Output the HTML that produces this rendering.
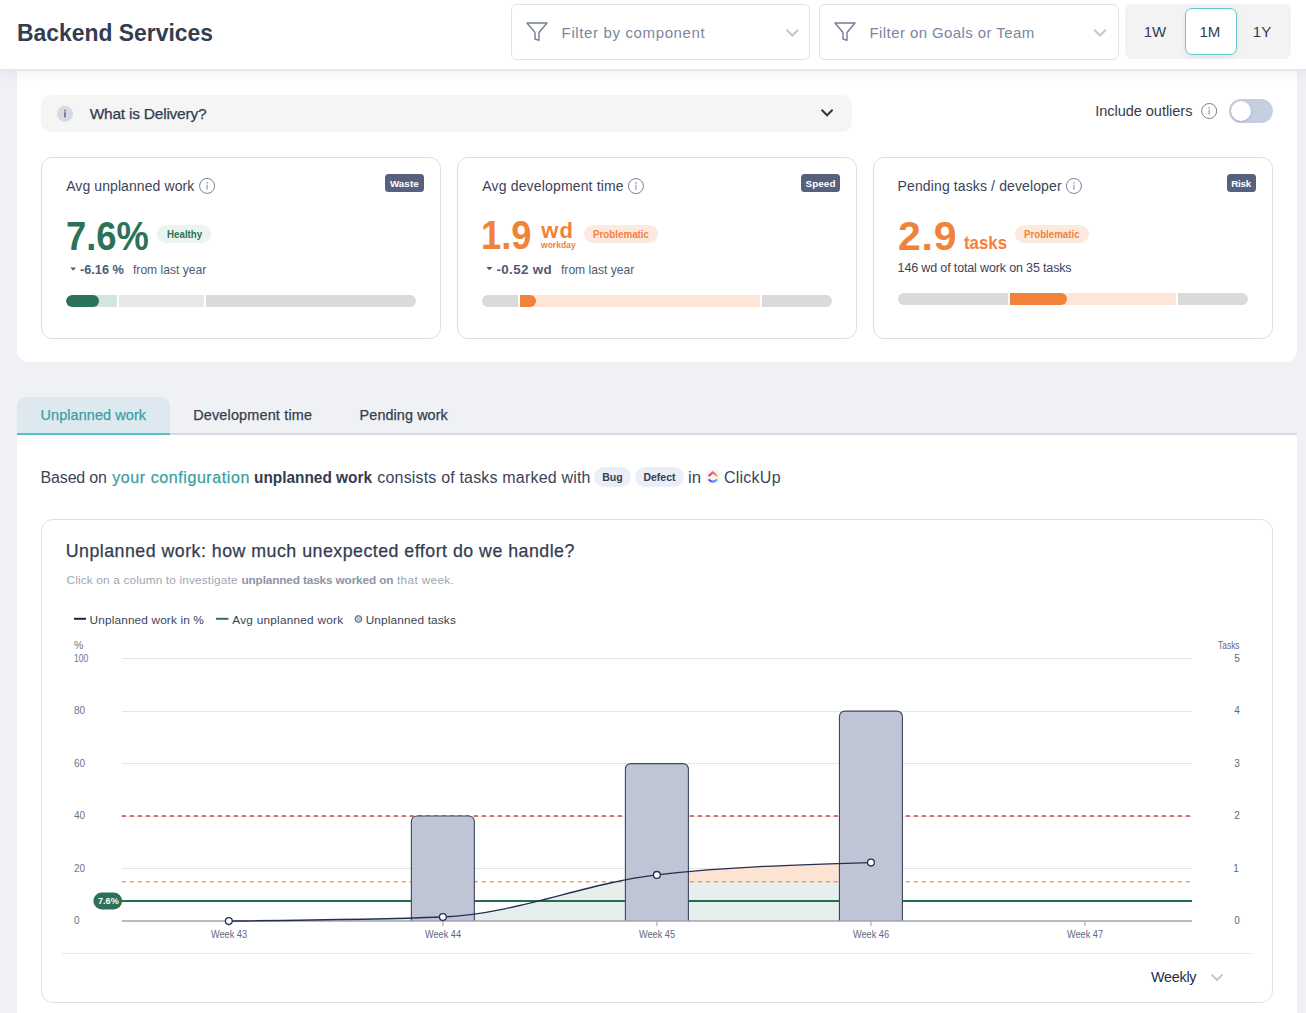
<!DOCTYPE html>
<html><head><meta charset="utf-8"><title>Backend Services</title>
<style>
*{box-sizing:border-box;margin:0;padding:0}
html,body{width:1306px;height:1013px;overflow:hidden;background:#f0f1f5;font-family:"Liberation Sans",sans-serif}
.a{position:absolute}
.t{position:absolute;white-space:nowrap;font-family:"Liberation Sans",sans-serif}
.ov{position:absolute;left:0;top:0;pointer-events:none}
</style></head><body>
<!-- top panel -->
<div class="a" style="left:17px;top:60px;width:1280px;height:302px;background:#fff;border-radius:0 0 12px 12px"></div>
<!-- header -->
<div class="a" style="left:0;top:0;width:1306px;height:70px;background:#fff;border-bottom:1px solid #e0e4ed;box-shadow:0 1px 0 #e6e9f0,0 3px 12px rgba(50,70,120,0.08)"></div>
<div class="a" style="left:511px;top:4px;width:299px;height:56px;border:1px solid #dfe3ec;border-radius:6px;background:#fff"></div>
<div class="a" style="left:819px;top:4px;width:300px;height:56px;border:1px solid #dfe3ec;border-radius:6px;background:#fff"></div>
<div class="a" style="left:1125px;top:4px;width:166px;height:55px;background:#f3f3f3;border-radius:7px"></div>
<div class="a" style="left:1185px;top:8px;width:52px;height:47px;background:#fff;border:1px solid #66c9cc;border-radius:7px;box-shadow:0 2px 6px rgba(0,0,0,0.07)"></div>
<!-- delivery bar -->
<div class="a" style="left:41px;top:95px;width:811px;height:37px;background:#f5f5f5;border-radius:10px"></div>
<!-- toggle -->
<div class="a" style="left:1229px;top:99px;width:44px;height:24px;background:#c8cee2;border-radius:12px"></div>
<div class="a" style="left:1231px;top:101px;width:20px;height:20px;background:#fff;border-radius:10px;box-shadow:0 1px 3px rgba(0,0,0,0.15)"></div>
<!-- cards -->
<div class="a" style="left:41px;top:157px;width:400px;height:182px;border:1px solid #d9dfe9;border-radius:11px;background:#fff"></div>
<div class="a" style="left:457px;top:157px;width:400px;height:182px;border:1px solid #d9dfe9;border-radius:11px;background:#fff"></div>
<div class="a" style="left:873px;top:157px;width:400px;height:182px;border:1px solid #d9dfe9;border-radius:11px;background:#fff"></div>
<!-- badges -->
<div class="a" style="left:385px;top:174px;width:39px;height:18px;background:#566180;border-radius:3.5px"></div>
<div class="a" style="left:801px;top:174px;width:39px;height:18px;background:#566180;border-radius:3.5px"></div>
<div class="a" style="left:1227px;top:174px;width:29px;height:18px;background:#566180;border-radius:3.5px"></div>
<!-- status pills -->
<div class="a" style="left:157px;top:225px;width:54px;height:18px;background:#ebf4ef;border-radius:9px"></div>
<div class="a" style="left:584px;top:225px;width:74px;height:18px;background:#fdeadf;border-radius:9px"></div>
<div class="a" style="left:1015px;top:225px;width:74px;height:18px;background:#fdeadf;border-radius:9px"></div>
<!-- progress card1 -->
<div class="a" style="left:66px;top:295px;width:350px;height:12px;border-radius:6px;overflow:hidden;background:#fff">
  <div class="a" style="left:0;top:0;width:51px;height:12px;background:#d3e5dc"></div>
  <div class="a" style="left:53px;top:0;width:85px;height:12px;background:#e8e8e8"></div>
  <div class="a" style="left:140px;top:0;width:210px;height:12px;background:#dadada"></div>
  <div class="a" style="left:0;top:0;width:33px;height:12px;background:#2b7256;border-radius:6px"></div>
</div>
<!-- progress card2 -->
<div class="a" style="left:482px;top:295px;width:350px;height:12px;border-radius:6px;overflow:hidden;background:#fff">
  <div class="a" style="left:0;top:0;width:36px;height:12px;background:#dadada"></div>
  <div class="a" style="left:38px;top:0;width:240px;height:12px;background:#fde6d7"></div>
  <div class="a" style="left:280px;top:0;width:70px;height:12px;background:#dadada"></div>
  <div class="a" style="left:38px;top:0;width:16px;height:12px;background:#f2813a;border-radius:0 6px 6px 0"></div>
</div>
<!-- progress card3 -->
<div class="a" style="left:898px;top:293px;width:350px;height:12px;border-radius:6px;overflow:hidden;background:#fff">
  <div class="a" style="left:0;top:0;width:110px;height:12px;background:#dadada"></div>
  <div class="a" style="left:112px;top:0;width:166px;height:12px;background:#fde6d7"></div>
  <div class="a" style="left:280px;top:0;width:70px;height:12px;background:#dadada"></div>
  <div class="a" style="left:112px;top:0;width:57px;height:12px;background:#f2813a;border-radius:0 6px 6px 0"></div>
</div>
<!-- tabs -->
<div class="a" style="left:17px;top:397px;width:153px;height:38px;background:#dee9ef;border-radius:9px 9px 0 0"></div>
<div class="a" style="left:17px;top:433px;width:1280px;height:2px;background:#d5dce6"></div>
<div class="a" style="left:17px;top:433px;width:153px;height:2px;background:#56c3c8"></div>
<div class="a" style="left:17px;top:435px;width:1280px;height:578px;background:#fff"></div>
<!-- bug/defect pills -->
<div class="a" style="left:594px;top:467px;width:37px;height:19.5px;background:#e9eef7;border-radius:10px"></div>
<div class="a" style="left:635px;top:467px;width:49px;height:19.5px;background:#e9eef7;border-radius:10px"></div>
<!-- chart card -->
<div class="a" style="left:41px;top:519px;width:1232px;height:484px;border:1px solid #dbe1ea;border-radius:12px;background:#fff"></div>
<svg class='ov' width='1306' height='1013' viewBox='0 0 1306 1013'><line x1='121.8' x2='1192.0' y1='658.5' y2='658.5' stroke='#e5e5e6' stroke-width='1'/><line x1='121.8' x2='1192.0' y1='711.5' y2='711.5' stroke='#e5e5e6' stroke-width='1'/><line x1='121.8' x2='1192.0' y1='763.5' y2='763.5' stroke='#e5e5e6' stroke-width='1'/><line x1='121.8' x2='1192.0' y1='816.5' y2='816.5' stroke='#e5e5e6' stroke-width='1'/><line x1='121.8' x2='1192.0' y1='868.5' y2='868.5' stroke='#e5e5e6' stroke-width='1'/><defs><clipPath id='above'><rect x='0' y='0' width='1306' height='881.65'/></clipPath><linearGradient id='cu1' x1='0' x2='1' y1='0' y2='0'><stop offset='0' stop-color='#ee1fae'/><stop offset='1' stop-color='#f7a41d'/></linearGradient><linearGradient id='cu2' x1='0' x2='1' y1='0' y2='0'><stop offset='0' stop-color='#6b36f2'/><stop offset='1' stop-color='#48b0f0'/></linearGradient></defs><path d='M228.82,921.00 C300.17,920.33 371.51,919.67 442.86,917.00 C514.21,914.33 585.55,883.10 656.90,874.90 C728.25,866.70 799.59,864.65 870.94,862.60 L870.94,921.0 L228.82,921.0 Z' fill='#e6efec'/><path d='M228.82,921.00 C300.17,920.33 371.51,919.67 442.86,917.00 C514.21,914.33 585.55,883.10 656.90,874.90 C728.25,866.70 799.59,864.65 870.94,862.60 L870.94,921.0 L228.82,921.0 Z' fill='#fde3d2' clip-path='url(#above)'/><line x1='121.8' x2='1192.0' y1='816.06' y2='816.06' stroke='#c9423f' stroke-width='1.5' stroke-dasharray='4 4'/><line x1='121.8' x2='1192.0' y1='881.65' y2='881.65' stroke='#f39a56' stroke-width='1.5' stroke-dasharray='4 4'/><line x1='121.8' x2='1192.0' y1='901.06' y2='901.06' stroke='#236d50' stroke-width='2'/><path d='M411.36,921.0 V822.06 Q411.36,816.06 417.36,816.06 H468.36 Q474.36,816.06 474.36,822.06 V921.0' fill='#c0c5d5' stroke='#3b4663' stroke-width='1.1'/><path d='M625.40,921.0 V769.59 Q625.40,763.59 631.40,763.59 H682.40 Q688.40,763.59 688.40,769.59 V921.0' fill='#c0c5d5' stroke='#3b4663' stroke-width='1.1'/><path d='M839.44,921.0 V717.12 Q839.44,711.12 845.44,711.12 H896.44 Q902.44,711.12 902.44,717.12 V921.0' fill='#c0c5d5' stroke='#3b4663' stroke-width='1.1'/><line x1='121.8' x2='1192.0' y1='921.0' y2='921.0' stroke='#9ca3b2' stroke-width='1.6'/><line x1='228.82' x2='228.82' y1='921.0' y2='926.0' stroke='#a7adbd' stroke-width='1.2'/><line x1='442.86' x2='442.86' y1='921.0' y2='926.0' stroke='#a7adbd' stroke-width='1.2'/><line x1='656.90' x2='656.90' y1='921.0' y2='926.0' stroke='#a7adbd' stroke-width='1.2'/><line x1='870.94' x2='870.94' y1='921.0' y2='926.0' stroke='#a7adbd' stroke-width='1.2'/><line x1='1084.98' x2='1084.98' y1='921.0' y2='926.0' stroke='#a7adbd' stroke-width='1.2'/><path d='M228.82,921.00 C300.17,920.33 371.51,919.67 442.86,917.00 C514.21,914.33 585.55,883.10 656.90,874.90 C728.25,866.70 799.59,864.65 870.94,862.60' fill='none' stroke='#243052' stroke-width='1.3'/><circle cx='228.82' cy='921.00' r='3.4' fill='#fff' stroke='#243052' stroke-width='1.3'/><circle cx='442.86' cy='917.00' r='3.4' fill='#fff' stroke='#243052' stroke-width='1.3'/><circle cx='656.90' cy='874.90' r='3.4' fill='#fff' stroke='#243052' stroke-width='1.3'/><circle cx='870.94' cy='862.60' r='3.4' fill='#fff' stroke='#243052' stroke-width='1.3'/><rect x='93.4' y='892.4' width='28.7' height='17.1' rx='8.5' fill='#2b7256'/><line x1='74' x2='86' y1='618.8' y2='618.8' stroke='#1d2747' stroke-width='2'/><line x1='216' x2='228.4' y1='618.8' y2='618.8' stroke='#2b7256' stroke-width='2'/><circle cx='358.4' cy='619' r='3.4' fill='#c0c5d5' stroke='#5a6381' stroke-width='1'/><line x1='62' x2='1252' y1='953.5' y2='953.5' stroke='#e4e8ef' stroke-width='1'/><polyline points='1211.5,974.5 1217,980 1222.5,974.5' fill='none' stroke='#c4c6cc' stroke-width='2'/><path d='M527,23 H547 L539,32.5 V40.3 L535,39 V32.5 Z' fill='none' stroke='#747d96' stroke-width='1.4' stroke-linejoin='round'/><path d='M835,23 H855 L847,32.5 V40.3 L843,39 V32.5 Z' fill='none' stroke='#747d96' stroke-width='1.4' stroke-linejoin='round'/><polyline points='786.5,29.8 792.3,35.5 798.1,29.8' fill='none' stroke='#c4c6cc' stroke-width='2'/><polyline points='1094.2,29.8 1100.0,35.5 1105.8,29.8' fill='none' stroke='#c4c6cc' stroke-width='2'/><polyline points='821.6,109.8 827.1,115.3 832.6,109.8' fill='none' stroke='#2d3748' stroke-width='2'/><circle cx='712.9' cy='477' r='8' fill='#f4f4f5'/><polyline points='709.3,475.6 712.9,472.2 716.5,475.6' fill='none' stroke='url(#cu1)' stroke-width='2' stroke-linecap='round' stroke-linejoin='round'/><path d='M709.3,479.9 Q712.9,483.2 716.5,479.9' fill='none' stroke='url(#cu2)' stroke-width='2' stroke-linecap='round'/><circle cx='207.1' cy='185.9' r='7.5' fill='none' stroke='#7a8296' stroke-width='1'/><circle cx='207.1' cy='182.70000000000002' r='0.9' fill='#a4a9b6'/><rect x='206.4' y='184.6' width='1.4' height='5' fill='#a4a9b6'/><circle cx='635.9' cy='186.1' r='7.5' fill='none' stroke='#7a8296' stroke-width='1'/><circle cx='635.9' cy='182.9' r='0.9' fill='#a4a9b6'/><rect x='635.1999999999999' y='184.79999999999998' width='1.4' height='5' fill='#a4a9b6'/><circle cx='1073.9' cy='186' r='7.5' fill='none' stroke='#7a8296' stroke-width='1'/><circle cx='1073.9' cy='182.8' r='0.9' fill='#a4a9b6'/><rect x='1073.2' y='184.7' width='1.4' height='5' fill='#a4a9b6'/><circle cx='1209.2' cy='111' r='7.5' fill='none' stroke='#7a8296' stroke-width='1'/><circle cx='1209.2' cy='107.8' r='0.9' fill='#a4a9b6'/><rect x='1208.5' y='109.7' width='1.4' height='5' fill='#a4a9b6'/><path d='M70.3,267.5 H76 L73.15,270.8 Z' fill='#4f5a75'/><path d='M486.3,266.9 H492.5 L489.4,270.3 Z' fill='#4f5a75'/><circle cx='65' cy='113.8' r='8' fill='#d6dae2'/><circle cx='65' cy='110.6' r='0.9' fill='#4f5a75'/><rect x='64.3' y='112.3' width='1.4' height='5' fill='#4f5a75'/></svg>
<div class='t' style='left:17.30px;top:17.80px;font-size:24px;line-height:30px;font-weight:700;color:#333c50;letter-spacing:0.000px;transform:scaleX(0.9537);transform-origin:0 0;'>Backend Services</div>
<div class='t' style='left:561.60px;top:22.90px;font-size:15px;line-height:19px;font-weight:400;color:#7a86a3;letter-spacing:0.632px;'>Filter by component</div>
<div class='t' style='left:869.50px;top:22.70px;font-size:15px;line-height:19px;font-weight:400;color:#7a86a3;letter-spacing:0.413px;'>Filter on Goals or Team</div>
<div class='t' style='left:1143.70px;top:21.80px;font-size:15px;line-height:19px;font-weight:400;color:#333c50;letter-spacing:0.000px;'>1W</div>
<div class='t' style='left:1199.38px;top:21.80px;font-size:15px;line-height:19px;font-weight:400;color:#333c50;letter-spacing:0.000px;'>1M</div>
<div class='t' style='left:1252.87px;top:21.80px;font-size:15px;line-height:19px;font-weight:400;color:#333c50;letter-spacing:0.000px;'>1Y</div>
<div class='t' style='left:89.70px;top:103.70px;font-size:15.5px;line-height:20px;font-weight:400;color:#333c50;letter-spacing:-0.232px;-webkit-text-stroke:0.25px currentColor;'>What is Delivery?</div>
<div class='t' style='left:1095.20px;top:102.00px;font-size:14.5px;line-height:19px;font-weight:400;color:#333c50;letter-spacing:-0.019px;'>Include outliers</div>
<div class='t' style='left:66.20px;top:176.80px;font-size:14px;line-height:18px;font-weight:400;color:#3b4459;letter-spacing:0.086px;'>Avg unplanned work</div>
<div class='t' style='left:482.30px;top:177.20px;font-size:14px;line-height:18px;font-weight:400;color:#3b4459;letter-spacing:0.162px;'>Avg development time</div>
<div class='t' style='left:897.60px;top:176.70px;font-size:14px;line-height:18px;font-weight:400;color:#3b4459;letter-spacing:0.121px;'>Pending tasks / developer</div>
<div class='t' style='left:389.90px;top:177.00px;font-size:9.8px;line-height:13px;font-weight:700;color:#ffffff;letter-spacing:0.070px;'>Waste</div>
<div class='t' style='left:805.50px;top:177.00px;font-size:9.8px;line-height:13px;font-weight:700;color:#ffffff;letter-spacing:0.123px;'>Speed</div>
<div class='t' style='left:1231.20px;top:177.00px;font-size:9.8px;line-height:13px;font-weight:700;color:#ffffff;letter-spacing:-0.207px;'>Risk</div>
<div class='t' style='left:65.90px;top:209.80px;font-size:41px;line-height:52px;font-weight:700;color:#2b7256;letter-spacing:0.000px;transform:scaleX(0.8853);transform-origin:0 0;'>7.6%</div>
<div class='t' style='left:166.60px;top:227.90px;font-size:10.4px;line-height:13px;font-weight:700;color:#2b7256;letter-spacing:0.000px;transform:scaleX(0.9383);transform-origin:0 0;'>Healthy</div>
<div class='t' style='left:80.20px;top:260.70px;font-size:13.4px;line-height:17px;font-weight:700;color:#4f5a75;letter-spacing:0.000px;transform:scaleX(0.9514);transform-origin:0 0;'>-6.16 %</div>
<div class='t' style='left:133.10px;top:260.70px;font-size:13.2px;line-height:17px;font-weight:400;color:#4f5a75;letter-spacing:0.000px;transform:scaleX(0.9166);transform-origin:0 0;'>from last year</div>
<div class='t' style='left:481.40px;top:210.40px;font-size:40px;line-height:50px;font-weight:700;color:#f2813a;letter-spacing:0.000px;transform:scaleX(0.9093);transform-origin:0 0;'>1.9</div>
<div class='t' style='left:541.27px;top:216.70px;font-size:22px;line-height:28px;font-weight:700;color:#f2813a;letter-spacing:1.168px;'>wd</div>
<div class='t' style='left:540.83px;top:239.20px;font-size:9.6px;line-height:12px;font-weight:700;color:#f2813a;letter-spacing:0.000px;transform:scaleX(0.8896);transform-origin:0 0;'>workday</div>
<div class='t' style='left:592.80px;top:226.70px;font-size:10.5px;line-height:14px;font-weight:700;color:#f2813a;letter-spacing:0.000px;transform:scaleX(0.9317);transform-origin:0 0;'>Problematic</div>
<div class='t' style='left:496.50px;top:260.80px;font-size:13.4px;line-height:17px;font-weight:700;color:#4f5a75;letter-spacing:0.342px;'>-0.52 wd</div>
<div class='t' style='left:560.50px;top:260.80px;font-size:13.2px;line-height:17px;font-weight:400;color:#4f5a75;letter-spacing:0.000px;transform:scaleX(0.9178);transform-origin:0 0;'>from last year</div>
<div class='t' style='left:898.00px;top:209.70px;font-size:41px;line-height:52px;font-weight:700;color:#f2813a;letter-spacing:0.813px;'>2.9</div>
<div class='t' style='left:964.30px;top:230.60px;font-size:18.5px;line-height:24px;font-weight:700;color:#f2813a;letter-spacing:0.000px;transform:scaleX(0.9092);transform-origin:0 0;'>tasks</div>
<div class='t' style='left:1024.30px;top:227.20px;font-size:10.5px;line-height:14px;font-weight:700;color:#f2813a;letter-spacing:0.000px;transform:scaleX(0.9244);transform-origin:0 0;'>Problematic</div>
<div class='t' style='left:897.60px;top:260.40px;font-size:12.5px;line-height:16px;font-weight:400;color:#3b4459;letter-spacing:-0.147px;'>146 wd of total work on 35 tasks</div>
<div class='t' style='left:40.50px;top:406.30px;font-size:14.4px;line-height:18px;font-weight:400;color:#3a9fa6;letter-spacing:0.119px;-webkit-text-stroke:0.25px currentColor;'>Unplanned work</div>
<div class='t' style='left:193.20px;top:406.30px;font-size:14.4px;line-height:18px;font-weight:400;color:#333c50;letter-spacing:0.188px;-webkit-text-stroke:0.25px currentColor;'>Development time</div>
<div class='t' style='left:359.60px;top:406.30px;font-size:14.4px;line-height:18px;font-weight:400;color:#333c50;letter-spacing:0.092px;-webkit-text-stroke:0.25px currentColor;'>Pending work</div>
<div class='t' style='left:40.60px;top:468.20px;font-size:16px;line-height:20px;font-weight:400;color:#3b4459;letter-spacing:-0.178px;'>Based on</div>
<div class='t' style='left:112.20px;top:468.20px;font-size:16px;line-height:20px;font-weight:400;color:#3a9fa6;letter-spacing:0.584px;-webkit-text-stroke:0.25px currentColor;'>your configuration</div>
<div class='t' style='left:254.00px;top:468.20px;font-size:16px;line-height:20px;font-weight:700;color:#333c50;letter-spacing:0.000px;transform:scaleX(0.9619);transform-origin:0 0;'>unplanned work</div>
<div class='t' style='left:377.30px;top:468.20px;font-size:16px;line-height:20px;font-weight:400;color:#3b4459;letter-spacing:0.180px;'>consists of tasks marked with</div>
<div class='t' style='left:602.29px;top:470.30px;font-size:10.5px;line-height:14px;font-weight:700;color:#333c50;letter-spacing:0.000px;'>Bug</div>
<div class='t' style='left:643.45px;top:470.30px;font-size:10.5px;line-height:14px;font-weight:700;color:#333c50;letter-spacing:0.000px;'>Defect</div>
<div class='t' style='left:687.70px;top:468.20px;font-size:16px;line-height:20px;font-weight:400;color:#3b4459;letter-spacing:0.000px;transform:scaleX(1.0462);transform-origin:0 0;'>in</div>
<div class='t' style='left:723.90px;top:468.20px;font-size:16px;line-height:20px;font-weight:400;color:#3b4459;letter-spacing:0.263px;'>ClickUp</div>
<div class='t' style='left:65.70px;top:539.60px;font-size:17.8px;line-height:23px;font-weight:400;color:#333c50;letter-spacing:0.484px;-webkit-text-stroke:0.25px currentColor;'>Unplanned work: how much unexpected effort do we handle?</div>
<div class='t' style='left:66.50px;top:573.00px;font-size:11.8px;line-height:15px;font-weight:400;color:#a0a6b3;letter-spacing:0.164px;'>Click on a column to investigate</div>
<div class='t' style='left:241.50px;top:573.00px;font-size:11.8px;line-height:15px;font-weight:700;color:#8d94a4;letter-spacing:-0.144px;'>unplanned tasks worked on</div>
<div class='t' style='left:397.00px;top:573.00px;font-size:11.8px;line-height:15px;font-weight:400;color:#a0a6b3;letter-spacing:0.335px;'>that week.</div>
<div class='t' style='left:89.60px;top:613.10px;font-size:11.8px;line-height:15px;font-weight:400;color:#3b4459;letter-spacing:0.153px;'>Unplanned work in %</div>
<div class='t' style='left:232.30px;top:613.10px;font-size:11.8px;line-height:15px;font-weight:400;color:#3b4459;letter-spacing:0.239px;'>Avg unplanned work</div>
<div class='t' style='left:365.70px;top:613.10px;font-size:11.8px;line-height:15px;font-weight:400;color:#3b4459;letter-spacing:0.161px;'>Unplanned tasks</div>
<div class='t' style='left:73.90px;top:637.90px;font-size:10.5px;line-height:14px;font-weight:400;color:#6b7389;letter-spacing:0.000px;'>%</div>
<div class='t' style='left:73.90px;top:651.95px;font-size:10px;line-height:13px;font-weight:400;color:#6b7389;letter-spacing:0.000px;transform:scaleX(0.8535);transform-origin:0 0;'>100</div>
<div class='t' style='left:73.90px;top:704.42px;font-size:10px;line-height:13px;font-weight:400;color:#6b7389;letter-spacing:0.000px;'>80</div>
<div class='t' style='left:73.90px;top:756.89px;font-size:10px;line-height:13px;font-weight:400;color:#6b7389;letter-spacing:0.000px;'>60</div>
<div class='t' style='left:73.90px;top:809.36px;font-size:10px;line-height:13px;font-weight:400;color:#6b7389;letter-spacing:0.000px;'>40</div>
<div class='t' style='left:73.90px;top:861.83px;font-size:10px;line-height:13px;font-weight:400;color:#6b7389;letter-spacing:0.000px;'>20</div>
<div class='t' style='left:73.90px;top:914.30px;font-size:10px;line-height:13px;font-weight:400;color:#6b7389;letter-spacing:0.000px;'>0</div>
<div class='t' style='left:1218.30px;top:639.00px;font-size:10px;line-height:13px;font-weight:400;color:#5f6880;letter-spacing:0.000px;transform:scaleX(0.8440);transform-origin:0 0;'>Tasks</div>
<div class='t' style='left:1234.14px;top:914.30px;font-size:10px;line-height:13px;font-weight:400;color:#5f6880;letter-spacing:0.000px;'>0</div>
<div class='t' style='left:1233.34px;top:861.83px;font-size:10px;line-height:13px;font-weight:400;color:#5f6880;letter-spacing:0.000px;'>1</div>
<div class='t' style='left:1234.14px;top:809.36px;font-size:10px;line-height:13px;font-weight:400;color:#5f6880;letter-spacing:0.000px;'>2</div>
<div class='t' style='left:1234.14px;top:756.89px;font-size:10px;line-height:13px;font-weight:400;color:#5f6880;letter-spacing:0.000px;'>3</div>
<div class='t' style='left:1234.14px;top:704.42px;font-size:10px;line-height:13px;font-weight:400;color:#5f6880;letter-spacing:0.000px;'>4</div>
<div class='t' style='left:1234.14px;top:651.95px;font-size:10px;line-height:13px;font-weight:400;color:#5f6880;letter-spacing:0.000px;'>5</div>
<div class='t' style='left:210.70px;top:927.80px;font-size:10px;line-height:13px;font-weight:400;color:#5f6880;letter-spacing:0.000px;transform:scaleX(0.9161);transform-origin:0 0;'>Week 43</div>
<div class='t' style='left:424.76px;top:927.80px;font-size:10px;line-height:13px;font-weight:400;color:#5f6880;letter-spacing:0.000px;transform:scaleX(0.9161);transform-origin:0 0;'>Week 44</div>
<div class='t' style='left:638.82px;top:927.80px;font-size:10px;line-height:13px;font-weight:400;color:#5f6880;letter-spacing:0.000px;transform:scaleX(0.9161);transform-origin:0 0;'>Week 45</div>
<div class='t' style='left:852.88px;top:927.80px;font-size:10px;line-height:13px;font-weight:400;color:#5f6880;letter-spacing:0.000px;transform:scaleX(0.9161);transform-origin:0 0;'>Week 46</div>
<div class='t' style='left:1066.94px;top:927.80px;font-size:10px;line-height:13px;font-weight:400;color:#5f6880;letter-spacing:0.000px;transform:scaleX(0.9161);transform-origin:0 0;'>Week 47</div>
<div class='t' style='left:1151.10px;top:967.80px;font-size:14.4px;line-height:18px;font-weight:400;color:#1f2d4d;letter-spacing:-0.296px;'>Weekly</div>
<div class='t' style='left:98.00px;top:895.20px;font-size:9.6px;line-height:12px;font-weight:700;color:#ffffff;letter-spacing:0.000px;transform:scaleX(0.9507);transform-origin:0 0;'>7.6%</div>
</body></html>
